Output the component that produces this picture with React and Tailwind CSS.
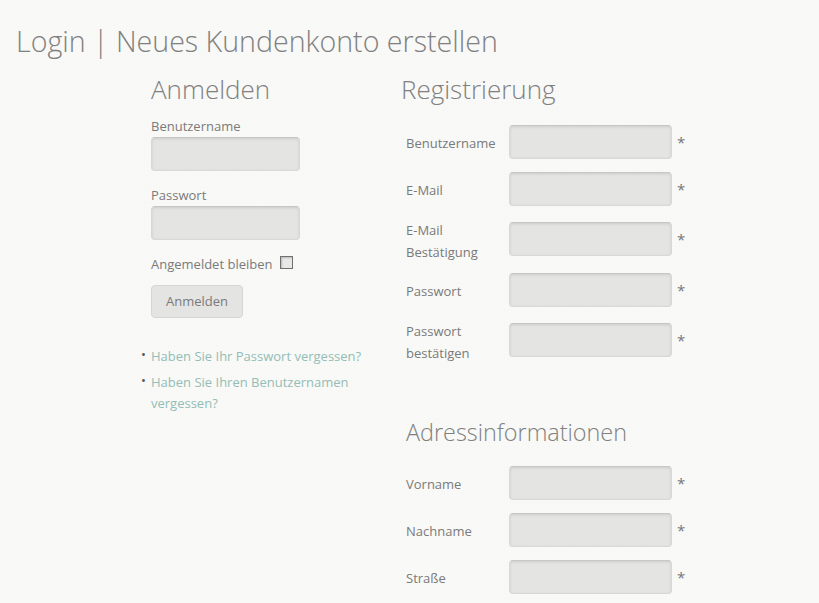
const inputClass =
	"block h-[34px] rounded-[4px] border border-[#d8d8d6] border-t-[#c6c6c4] bg-[#e4e4e3] shadow-[inset_0_1px_3px_rgba(0,0,0,0.1)]";

function Row({ label, labelClass = "pt-[1px] -mb-[1px]", rowClass = "" }) {
	return (
		<div className={`flex items-center ${rowClass}`}>
			<label className={`w-[108px] pl-[5px] leading-[22px] ${labelClass}`}>{label}</label>
			<div className={`w-[163px] ${inputClass}`} />
			<span className="ml-[5px] w-3 text-[15px] text-[#777]">*</span>
		</div>
	);
}

export default function App() {
	return (
		<div className="h-[603px] overflow-hidden bg-[#f9f9f7] bg-[repeating-linear-gradient(90deg,rgba(0,0,0,0.005)_0,rgba(0,0,0,0.005)_1px,transparent_1px,transparent_3px),repeating-linear-gradient(0deg,rgba(0,0,0,0.005)_0,rgba(0,0,0,0.005)_1px,transparent_1px,transparent_4px)] font-['Open_Sans',sans-serif] text-[13px] text-[#7a7a7a]">
			{/* Page title */}
			<h1 className="pl-4 pt-[21px] text-[28.6px] font-light leading-[40px] text-[#808080]">
				Login | Neues Kundenkonto erstellen
			</h1>

			<div className="mt-[8px] flex pl-[151px]">
				{/* Login column */}
				<div className="w-[250px]">
					<h2 className="text-[26px] font-light leading-[40px] text-[#808080]">
						Anmelden
					</h2>
					<div className="mt-[8px] leading-[18px]">Benutzername</div>
					<div className={`mt-[2px] w-[149px] ${inputClass}`} />
					<div className="mt-[15px] leading-[18px]">Passwort</div>
					<div className={`mt-[2px] w-[149px] ${inputClass}`} />
					<div className="mt-[16px] flex h-[18px] items-center">
						<span>Angemeldet bleiben</span>
						<span className="ml-[8px] mb-[5px] h-[13px] w-[13px] border border-[#707070] bg-[#e8e8e8] shadow-[inset_1px_1px_2px_rgba(0,0,0,0.2)]" />
					</div>
					<button
						type="button"
						className="mt-[11px] block h-[33px] w-[92px] rounded-[4px] border border-[#d6d6d4] bg-[#e4e4e3] text-[13px] text-[#7a7a7a]">
						Anmelden
					</button>
					<ul className="mt-[28px] w-[220px] leading-[21px] text-[#93bdb6]">
						<li className="relative">
							<span className="absolute left-[-10px] top-[-2px] text-[#555]">•</span>
							Haben Sie Ihr Passwort vergessen?
						</li>
						<li className="relative mt-[5px]">
							<span className="absolute left-[-10px] top-[-2px] text-[#555]">•</span>
							Haben Sie Ihren Benutzernamen vergessen?
						</li>
					</ul>
				</div>

				{/* Registration column */}
				<div className="w-[300px]">
					<h2 className="text-[26px] font-light leading-[40px] text-[#808080]">
						Registrierung
					</h2>
					<div className="mt-[16px]">
						<Row label="Benutzername" rowClass="mb-[13px]" />
						<Row label="E-Mail" rowClass="mb-[11px]" />
						<Row
							label={<>E-Mail<br />Bestätigung</>}
							labelClass="pt-[2px] -mb-[2px]"
							rowClass="mb-[12px]"
						/>
						<Row label="Passwort" rowClass="mb-[11px]" />
						<Row label={<>Passwort<br />bestätigen</>} labelClass="pt-[2px] -mb-[2px]" />
					</div>
					<h2 className="mt-[50px] pl-[5px] text-[23.4px] font-light leading-[40px] text-[#808080]">
						Adressinformationen
					</h2>
					<div className="mt-[14px]">
						<Row label="Vorname" rowClass="mb-[13px]" />
						<Row label="Nachname" rowClass="mb-[13px]" />
						<Row label="Straße" />
					</div>
				</div>
			</div>
		</div>
	);
}
